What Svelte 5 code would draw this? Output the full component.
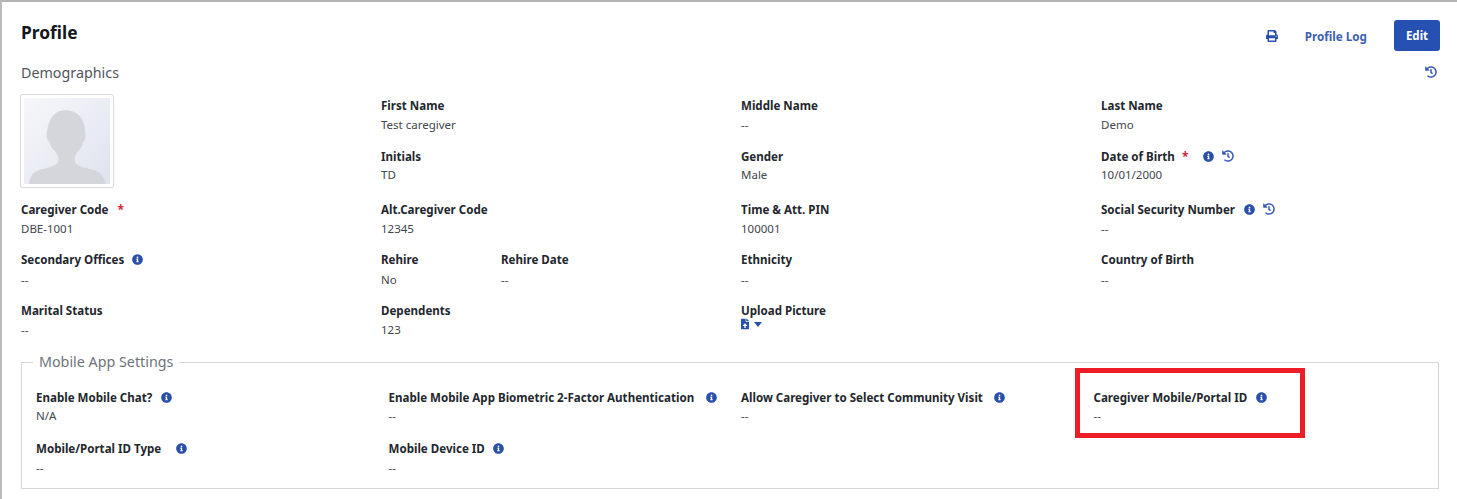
<script>
  const infoPath = 'M256 8C119.043 8 8 119.083 8 256c0 136.997 111.043 248 248 248s248-111.003 248-248C504 119.083 392.957 8 256 8zm0 110c23.196 0 42 18.804 42 42s-18.804 42-42 42-42-18.804-42-42 18.804-42 42-42zm56 254c0 6.627-5.373 12-12 12h-88c-6.627 0-12-5.373-12-12v-24c0-6.627 5.373-12 12-12h12v-64h-12c-6.627 0-12-5.373-12-12v-24c0-6.627 5.373-12 12-12h64c6.627 0 12 5.373 12 12v100h12c6.627 0 12 5.373 12 12v24z'
  const historyPath = 'M504 255.531c.253 136.64-111.18 248.372-247.82 248.468-59.015.042-113.223-20.53-155.822-54.911-11.077-8.94-11.905-25.541-1.839-35.607l11.267-11.267c8.609-8.609 22.353-9.551 31.891-1.984C173.062 425.135 212.781 440 256 440c101.705 0 184-82.311 184-184 0-101.705-82.311-184-184-184-48.814 0-93.149 18.969-126.068 49.932l50.754 50.754c10.08 10.08 2.941 27.314-11.313 27.314H24c-8.837 0-16-7.163-16-16V38.627c0-14.254 17.234-21.393 27.314-11.314l49.372 49.372C129.209 34.136 189.552 8 256 8c136.81 0 247.747 110.78 248 247.531zm-180.912 78.784l9.823-12.63c8.138-10.463 6.253-25.542-4.21-33.679L288 256.349V152c0-13.255-10.745-24-24-24h-16c-13.255 0-24 10.745-24 24v135.651l65.409 50.874c10.463 8.137 25.541 6.253 33.679-4.21z'

  const rows = [
    [
      { label: 'First Name', value: 'Test caregiver' },
      { label: 'Middle Name', value: '--' },
      { label: 'Last Name', value: 'Demo' }
    ],
    [
      { label: 'Initials', value: 'TD' },
      { label: 'Gender', value: 'Male' },
      { label: 'Date of Birth', value: '10/01/2000', required: true, reqGap: 7, info: true, infoGap: 15, history: true }
    ]
  ]

  const lower = [
    { label: 'Caregiver Code', value: 'DBE-1001', required: true },
    { label: 'Alt.Caregiver Code', value: '12345' },
    { label: 'Time & Att. PIN', value: '100001' },
    { label: 'Social Security Number', value: '--', info: true, history: true },
    { label: 'Secondary Offices', value: '--', info: true, infoGap: 8 },
    { split: [{ label: 'Rehire', value: 'No' }, { label: 'Rehire Date', value: '--' }] },
    { label: 'Ethnicity', value: '--' },
    { label: 'Country of Birth', value: '--' },
    { label: 'Marital Status', value: '--' },
    { label: 'Dependents', value: '123' },
    { label: 'Upload Picture', upload: true }
  ]

  const mobile = [
    { label: 'Enable Mobile Chat?', value: 'N/A', info: true },
    { label: 'Enable Mobile App Biometric 2-Factor Authentication', value: '--', info: true, infoGap: 12 },
    { label: 'Allow Caregiver to Select Community Visit', value: '--', info: true, infoGap: 11 },
    { label: 'Caregiver Mobile/Portal ID', value: '--', info: true },
    { label: 'Mobile/Portal ID Type', value: '--', info: true, infoGap: 15 },
    { label: 'Mobile Device ID', value: '--', info: true, infoGap: 8 }
  ]
</script>

{#snippet field(f)}
  <div class="field">
    <div class="label">
      <span>{f.label}</span>
      {#if f.required}<span class="req" style:margin-left={f.reqGap ? f.reqGap + 'px' : null}>*</span>{/if}
      {#if f.info}
        <svg class="ico info" style:margin-left={f.infoGap ? f.infoGap + 'px' : null} viewBox="0 0 512 512"><path d={infoPath} /></svg>
      {/if}
      {#if f.history}
        <svg class="ico hist" viewBox="0 0 512 512"><path d={historyPath} /></svg>
      {/if}
    </div>
    {#if f.upload}
      <div class="upload">
        <svg class="file" viewBox="0 0 384 512"><path d="M224 136V0H24C10.7 0 0 10.7 0 24v464c0 13.3 10.7 24 24 24h336c13.3 0 24-10.7 24-24V160H248c-13.2 0-24-10.8-24-24zm65.18 216.01H224v80c0 8.84-7.16 16-16 16h-32c-8.84 0-16-7.16-16-16v-80H94.82c-14.28 0-21.41-17.29-11.39-27.36l96.42-95.7c6.65-6.61 17.39-6.61 24.04 0l96.42 95.7c10.03 10.07 2.91 27.36-11.37 27.36zM377 105L279.1 7c-4.5-4.5-10.6-7-17-7H256v128h128v-6.1c0-6.3-2.5-12.4-7-16.9z" /></svg>
        <svg class="caret" viewBox="0 0 10 6"><path d="M0 0h10L5 6z" /></svg>
      </div>
    {:else}
      <div class="value">{f.value}</div>
    {/if}
  </div>
{/snippet}

<div class="page">
  <header class="top">
    <h1>Profile</h1>
    <div class="actions">
      <svg class="print" viewBox="0 0 512 512"><path d="M448 192V77.25c0-8.49-3.37-16.62-9.37-22.63L393.37 9.37c-6-6-14.14-9.37-22.63-9.37H96C78.33 0 64 14.33 64 32v160c-35.35 0-64 28.65-64 64v112c0 8.84 7.16 16 16 16h48v96c0 17.67 14.33 32 32 32h320c17.67 0 32-14.33 32-32v-96h48c8.84 0 16-7.16 16-16V256c0-35.35-28.65-64-64-64zm-64 256H128v-96h256v96zm0-224H128V64h192v48c0 8.84 7.16 16 16 16h48v96zm48 72c-13.25 0-24-10.75-24-24 0-13.26 10.75-24 24-24s24 10.74 24 24c0 13.25-10.75 24-24 24z" /></svg>
      <span class="log">Profile Log</span>
      <button class="edit">Edit</button>
    </div>
  </header>

  <div class="section">
    <h2>Demographics</h2>
    <svg class="ico hist" viewBox="0 0 512 512"><path d={historyPath} /></svg>
  </div>

  <div class="demo">
    <div class="photo">
      <div class="frame">
        <svg viewBox="0 0 85 85">
          <defs>
            <linearGradient id="bg" x1="0" y1="0" x2="1" y2="1">
              <stop offset="0" stop-color="#f6f7fa" />
              <stop offset="1" stop-color="#dfe3ee" />
            </linearGradient>
          </defs>
          <rect width="85" height="85" fill="url(#bg)" />
          <path fill="#d4d6db" d="M5 85c1-8 4-12 11-14 9-2.500 17-4 18-9 .5-3-.5-5-3-9-3-2-5-6-6-10-2-1-3-4-2.500-8C24 22 29 12 41 12c13 0 20 10 19.500 24 .5 3.500-.5 6.500-2 7.500-1 4-3 8-6 10-2 3.500-3 5.500-2.500 8.500 1 5 9 6.500 18 9 7 2 11 6 13 14z" />
        </svg>
      </div>
    </div>
    {#each rows[0] as f}{@render field(f)}{/each}
    {#each rows[1] as f}{@render field(f)}{/each}
  </div>

  <div class="lower">
    {#each lower as f}
      {#if f.split}
        <div class="split">
          {#each f.split as s}{@render field(s)}{/each}
        </div>
      {:else}
        {@render field(f)}
      {/if}
    {/each}
  </div>

  <fieldset class="mobile">
    <legend>Mobile App Settings</legend>
    <div class="mobile-grid">
      {#each mobile as f}{@render field(f)}{/each}
    </div>
  </fieldset>

  <div class="callout"></div>
</div>

<style>
  :global(body) {
    margin: 0;
    background: #fff;
  }
  .page {
    position: relative;
    box-sizing: border-box;
    height: 499px;
    padding: 0 17px 0 19px;
    border-top: 2px solid #b4b4b4;
    border-left: 2px solid #bcbcbc;
    font-family: "Noto Sans", sans-serif;
    font-size: 11.5px;
    color: #3a3f47;
    overflow: hidden;
  }
  .top {
    display: flex;
    justify-content: space-between;
    align-items: flex-start;
    height: 52px;
    padding-top: 18px;
    box-sizing: border-box;
  }
  h1 {
    margin: 0;
    font-size: 17.400px;
    line-height: 24px;
    font-weight: 700;
    color: #14171c;
  }
  .actions {
    display: flex;
    align-items: center;
    height: 31px;
  }
  .print {
    width: 12px;
    height: 12px;
    fill: #2a50ad;
    margin-right: 27px;
  }
  .log {
    font-weight: 700;
    font-size: 11.700px;
    color: #3d5fb5;
    margin-right: 27px;
  }
  .edit {
    width: 46px;
    height: 31px;
    border: 0;
    border-radius: 3px;
    background: #2650b2;
    color: #fff;
    font: 700 11.500px "Noto Sans", sans-serif;
    padding: 0;
  }
  .section {
    display: flex;
    justify-content: space-between;
    align-items: flex-start;
    box-sizing: border-box;
    height: 41px;
    padding: 9px 3px 0 0;
  }
  h2 {
    margin: 0;
    font-size: 14.300px;
    line-height: 19px;
    font-weight: 400;
    color: #50555c;
  }
  .section .ico {
    width: 12px;
    height: 12px;
    margin: 3px 0 0;
  }
  .demo {
    display: grid;
    grid-template-columns: repeat(4, 360px);
    grid-template-rows: 51px 53px;
  }
  .demo .field:nth-child(n+5) .value {
    margin-top: 3px;
  }
  .photo {
    grid-row: 1 / span 2;
    grid-column: 1;
  }
  .frame {
    box-sizing: border-box;
    width: 94px;
    height: 94px;
    margin: -1px 0 0 -1px;
    padding: 3px;
    border: 1px solid #dcdcdc;
    border-radius: 3px;
    box-shadow: 0 0 1px #e4e4e4;
  }
  .frame svg {
    display: block;
    width: 100%;
    height: 100%;
  }
  .lower {
    display: grid;
    grid-template-columns: repeat(4, 360px);
    grid-auto-rows: 50.500px;
  }
  .split {
    display: grid;
    grid-template-columns: 120px 1fr;
  }
  .field {
    min-width: 0;
  }
  .label {
    display: flex;
    align-items: center;
    height: 16px;
    margin-top: 2px;
    font-weight: 700;
    font-size: 11.570px;
    color: #23272e;
    white-space: nowrap;
  }
  .value {
    margin-top: 4px;
    line-height: 16px;
    color: #42464d;
  }
  .req {
    color: #d3293d;
    margin-left: 9px;
    font-size: 12px;
  }
  .ico {
    width: 11px;
    height: 11px;
    flex: none;
  }
  .info {
    fill: #2a4fa8;
    margin-left: 9px;
  }
  .hist {
    width: 12px;
    height: 12px;
    fill: #3a5cb8;
    margin-left: 8px;
  }
  .req + .info {
    margin-left: 14px;
  }
  .upload {
    display: flex;
    align-items: center;
    gap: 5px;
    height: 12px;
    margin-top: 0;
  }
  .file {
    width: 8px;
    height: 12px;
    fill: #2a50ad;
  }
  .caret {
    width: 8px;
    height: 5px;
    fill: #2a50ad;
  }
  .mobile {
    box-sizing: border-box;
    width: 1418px;
    min-width: 0;
    margin: 1.500px 0 0;
    padding: 14px 14px 0;
    height: 137px;
    border: 1px solid #d6d6d6;
  }
  legend {
    margin-left: -3px;
    padding: 0 6px 2px;
    font-size: 14.300px;
    line-height: 19px;
    color: #6e7379;
  }
  .mobile-grid {
    display: grid;
    grid-template-columns: repeat(4, 352.500px);
    grid-auto-rows: 51px;
  }
  .mobile .field:nth-child(-n+4) .value {
    margin-top: 3px;
  }
  .callout {
    position: absolute;
    left: 1073px;
    top: 366px;
    width: 230px;
    height: 70px;
    box-sizing: border-box;
    border: 5px solid #ee1c27;
  }
</style>
